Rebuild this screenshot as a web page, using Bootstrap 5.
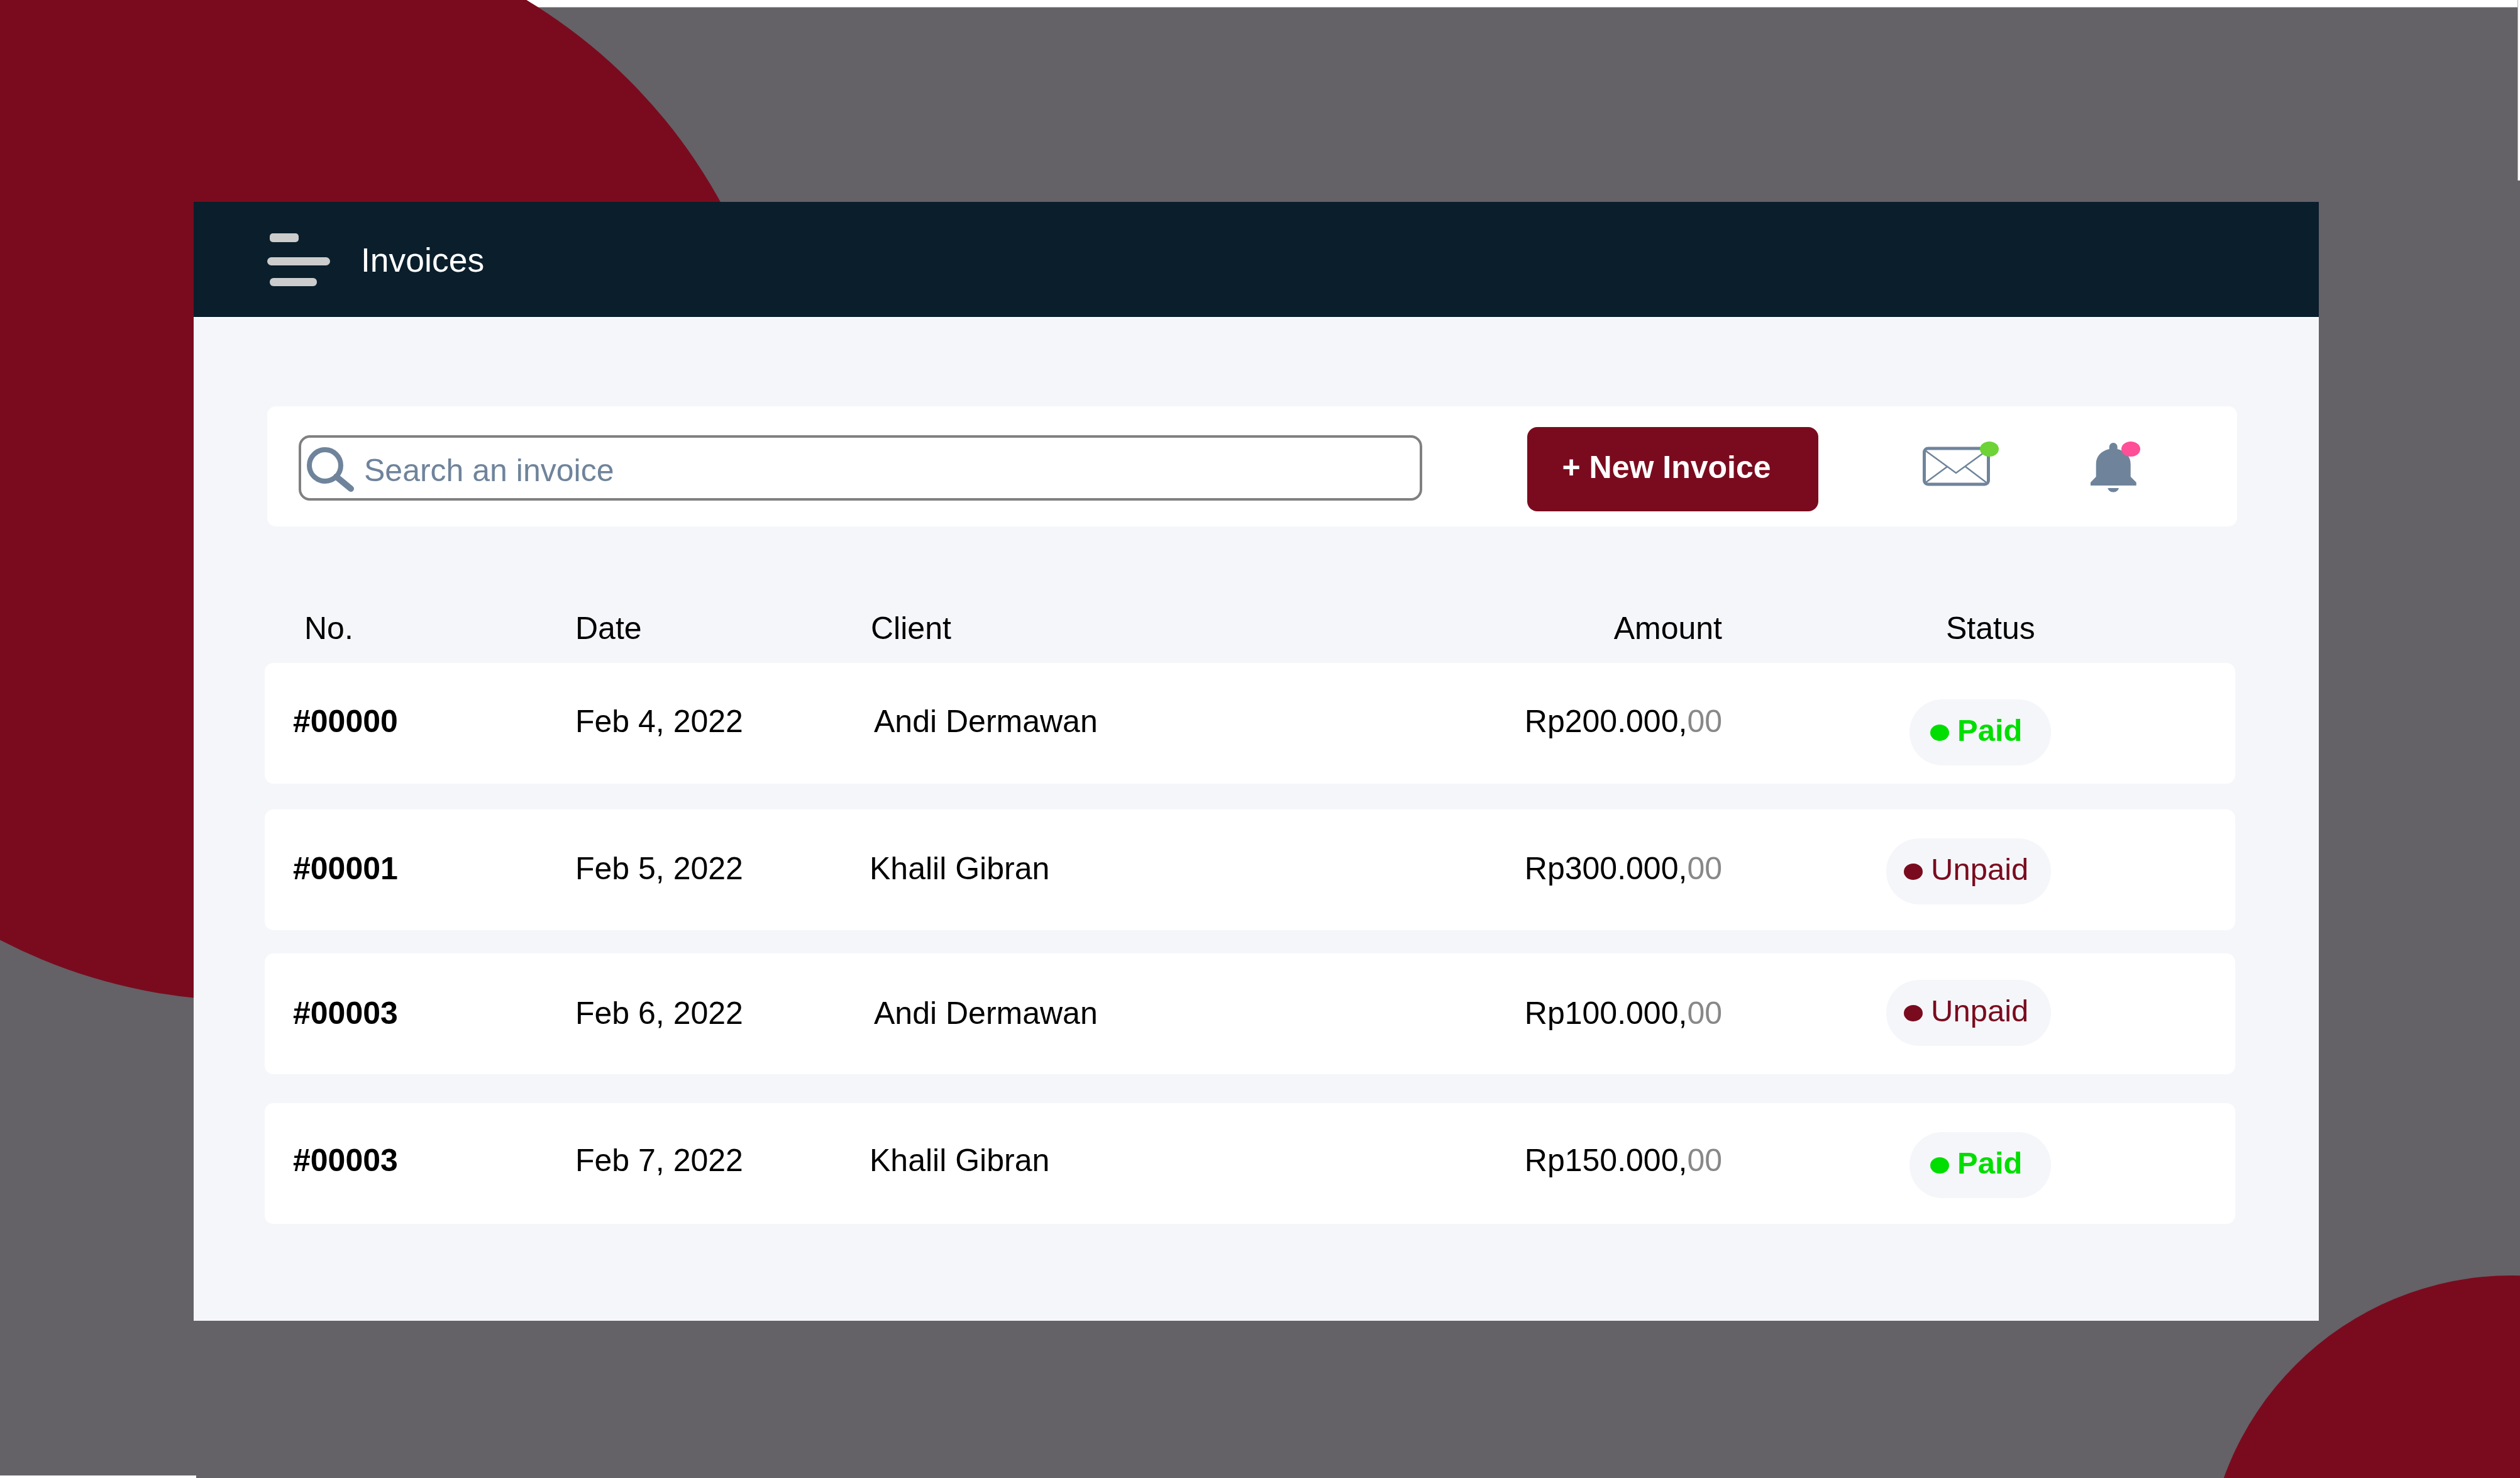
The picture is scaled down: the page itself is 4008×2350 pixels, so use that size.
<!DOCTYPE html>
<html lang="en">
<head>
    <meta charset="UTF-8">
    <meta name="viewport" content="width=device-width, initial-scale=1.0">
    <title>Invoices</title>
    <link href="https://cdn.jsdelivr.net/npm/bootstrap@5.3.0/dist/css/bootstrap.min.css" rel="stylesheet">
    <style>
        body { background: #fff; font-family: "Liberation Sans", Arial, sans-serif; color: #000; }
        .stage { position: relative; width: 4008px; height: 2350px; overflow: hidden; background: #646167; padding: 321px 0 0 308px; }

        /* white slivers at the edge of the picture and the two red circles */
        .edge-top { position: absolute; left: 0; top: 0; width: 4004px; height: 12px; background: #fff; border-bottom: 1px solid #b5b5b5; }
        .edge-right { position: absolute; left: 4004px; top: 0; width: 4px; height: 287px; background: #fff; border-left: 1px solid #b5b5b5; }
        .edge-bottom { position: absolute; left: 0; top: 2346px; width: 312px; height: 4px; background: #fff; }
        .blob { position: absolute; border-radius: 50%; background: #7a0b1e; }
        .blob-top { left: -462px; top: -123px; width: 1714px; height: 1714px; }
        .blob-bottom { left: 3508px; top: 2028px; width: 974px; height: 974px; }

        .sheet { position: relative; width: 3380px; height: 1779px; background: #f5f6fa; }
        .topbar { height: 185px; padding: 0 0 0 117px; background: #0a1e2b; border-bottom: 2px solid #fff; flex-wrap: nowrap; justify-content: flex-start; }
        .topbar-title { margin: 0 0 0 49px; padding: 3px 0 0; color: #fff; font-size: 53.5px; line-height: 1.2; }

        .toolbar { width: 3133px; height: 191px; margin: 140px 0 0 117px; padding-left: 50px; border-radius: 14px; }
        .search-box { position: relative; width: 1787px; height: 104px; margin-top: 5px; }
        .search-box svg { position: absolute; left: 13px; top: 19px; }
        .search-input { width: 100%; height: 100%; padding: 7px 10px 0 100px; border: 4px solid #808080; border-radius: 18px; font-size: 50px; line-height: 1.2; color: #6f849b; }
        .search-input::placeholder { color: #6f849b; opacity: 1; }
        .new-btn { width: 463px; height: 134px; margin: 9px 0 0 167px; padding: 0 20px 6px 0; border: 0; border-radius: 16px; background: #7a0b1e; color: #fff; font-size: 50px; font-weight: 700; line-height: 1.2; }
        .mail-icon { margin: -8px 0 0 166px; }
        .bell-icon { margin: 3px 0 0 146px; }

        .inv-grid { display: grid; grid-template-columns: 449px 468px 1fr 340px 523px; align-items: start; width: 3134px; margin-left: 113px; padding: 0 293px 0 45px; font-size: 50px; line-height: 60px; }
        .inv-head { margin-top: 132px; }
        .inv-row { height: 192px; padding-top: 63px; border-radius: 14px; }
        .inv-row-1 { margin-top: 25px; }
        .inv-row-2 { margin-top: 41px; padding-top: 64px; }
        .inv-row-3 { margin-top: 37px; padding-top: 65px; }
        .inv-row-4 { margin-top: 46px; padding-top: 61px; }
        .inv-no { font-weight: 700; }
        .head-no { margin-left: 18px; }
        .head-client { margin-left: 2px; }
        .head-status { margin-left: 356px; }
        .client-a { margin-left: 7px; }
        .cents { color: #888; }

        .state { justify-self: end; display: flex; align-items: center; height: 105px; padding-bottom: 7px; border-radius: 52px; background: #f5f6fa; line-height: 1.2; }
        .state i { display: block; flex: none; width: 30px; height: 26px; margin: 7px 13px 0 0; border-radius: 50%; background: currentColor; }
        .state-paid { width: 225px; padding-left: 33px; color: #00de00; font-size: 49px; font-weight: 700; }
        .state-unpaid { width: 262px; padding-left: 28px; color: #7a0b1e; font-size: 49px; }
        .inv-row-1 .state { margin-top: -5px; }
        .inv-row-2 .state { margin-top: -18px; }
        .inv-row-3 .state { margin-top: -23px; }
        .inv-row-4 .state { margin-top: -15px; }
    </style>
</head>
<body>
    <div class="stage">
        <div class="edge-top"></div>
        <div class="edge-right"></div>
        <div class="edge-bottom"></div>
        <div class="blob blob-top"></div>
        <div class="blob blob-bottom"></div>

        <div class="sheet">
            <nav class="navbar topbar">
                <svg width="100" height="84" viewBox="0 0 100 84" fill="#ccc">
                    <rect x="4" y="0" width="46" height="14" rx="5"/>
                    <rect x="0" y="38" width="100" height="13" rx="6.5"/>
                    <rect x="4" y="71" width="75" height="13" rx="6"/>
                </svg>
                <h1 class="topbar-title fw-normal">Invoices</h1>
            </nav>

            <div class="toolbar d-flex align-items-center bg-white">
                <div class="search-box">
                    <input class="search-input" type="text" placeholder="Search an invoice">
                    <svg width="75" height="71" viewBox="0 0 75 71" fill="none" stroke="#6f849b">
                        <circle cx="29" cy="29" r="25" stroke-width="8"/>
                        <path d="M47 47 L70 66" stroke-width="10" stroke-linecap="round"/>
                    </svg>
                </div>
                <button class="btn new-btn" type="button">+ New Invoice</button>
                <svg class="mail-icon" width="121" height="71" viewBox="0 0 121 71" fill="none" stroke="#6f849b">
                    <rect x="2.5" y="11" width="102" height="57" rx="6" stroke-width="5"/>
                    <path d="M5 15 L53 50 L97 18" stroke-width="2.5"/>
                    <path d="M5 65 L39 40 M68 40 L101 65" stroke-width="2.5"/>
                    <ellipse cx="106" cy="12" rx="15" ry="12" fill="#6dd337" stroke="none"/>
                </svg>
                <svg class="bell-icon" width="79" height="82" viewBox="0 0 79 82" fill="#6f849b">
                    <path d="M36.2 2 a6.5 6.5 0 0 1 6.5 6.5 V12 C55 15 63.7 23 63.7 36 V56 L72.7 65 V70 H0 V65 L8.7 56 V36 C8.7 23 17 15 29.7 12 V8.5 A6.5 6.5 0 0 1 36.2 2 Z"/>
                    <path d="M27.3 74 H45 A9 8 0 0 1 27.3 74 Z"/>
                    <ellipse cx="64" cy="12" rx="15" ry="12" fill="#ff4f96"/>
                </svg>
            </div>

            <div class="inv-grid inv-head">
                <div class="head-no">No.</div>
                <div>Date</div>
                <div class="head-client">Client</div>
                <div class="text-end">Amount</div>
                <div class="head-status">Status</div>
            </div>

            <div class="inv-grid inv-row inv-row-1 bg-white">
                <div class="inv-no">#00000</div>
                <div>Feb 4, 2022</div>
                <div class="client-a">Andi Dermawan</div>
                <div class="text-end">Rp200.000,<span class="cents">00</span></div>
                <div class="state state-paid"><i></i>Paid</div>
            </div>
            <div class="inv-grid inv-row inv-row-2 bg-white">
                <div class="inv-no">#00001</div>
                <div>Feb 5, 2022</div>
                <div>Khalil Gibran</div>
                <div class="text-end">Rp300.000,<span class="cents">00</span></div>
                <div class="state state-unpaid"><i></i>Unpaid</div>
            </div>
            <div class="inv-grid inv-row inv-row-3 bg-white">
                <div class="inv-no">#00003</div>
                <div>Feb 6, 2022</div>
                <div class="client-a">Andi Dermawan</div>
                <div class="text-end">Rp100.000,<span class="cents">00</span></div>
                <div class="state state-unpaid"><i></i>Unpaid</div>
            </div>
            <div class="inv-grid inv-row inv-row-4 bg-white">
                <div class="inv-no">#00003</div>
                <div>Feb 7, 2022</div>
                <div>Khalil Gibran</div>
                <div class="text-end">Rp150.000,<span class="cents">00</span></div>
                <div class="state state-paid"><i></i>Paid</div>
            </div>
        </div>
    </div>
    <script src="https://cdn.jsdelivr.net/npm/bootstrap@5.3.0/dist/js/bootstrap.bundle.min.js"></script>
</body>
</html>
